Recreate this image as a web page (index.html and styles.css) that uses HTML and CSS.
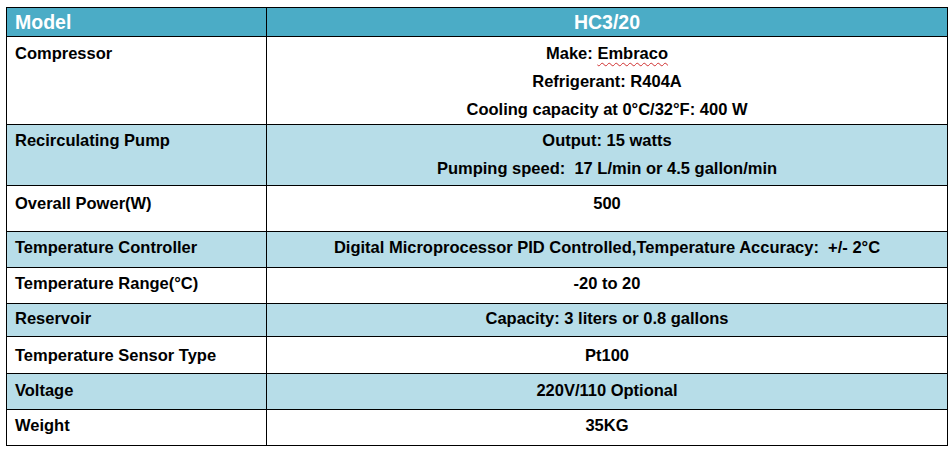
FILE: index.html
```html
<!DOCTYPE html>
<html lang="en">
<head>
<meta charset="utf-8">
<title>HC3/20 Specifications</title>
<link rel="stylesheet" href="styles.css">
</head>
<body>
<table class="spec">
  <colgroup><col class="col-label"><col class="col-value"></colgroup>
  <tr class="head">
    <th class="label">Model</th>
    <th class="value">HC3/20</th>
  </tr>
  <tr class="r-compressor pad-2">
    <td class="label">Compressor</td>
    <td class="value">Make: <span class="spell">Embraco</span><br>Refrigerant: R404A<br>Cooling capacity at 0°C/32°F: 400 W</td>
  </tr>
  <tr class="r-pump tint pad-1">
    <td class="label">Recirculating Pump</td>
    <td class="value">Output: 15 watts<br>Pumping speed:&nbsp; 17 L/min or 4.5 gallon/min</td>
  </tr>
  <tr class="r-power pad-3">
    <td class="label">Overall Power(W)</td>
    <td class="value">500</td>
  </tr>
  <tr class="r-36 tint pad-1">
    <td class="label">Temperature Controller</td>
    <td class="value">Digital Microprocessor PID Controlled,Temperature Accuracy:&nbsp; +/- 2°C</td>
  </tr>
  <tr class="r-36 pad-1">
    <td class="label">Temperature Range(°C)</td>
    <td class="value">-20 to 20</td>
  </tr>
  <tr class="r-reservoir tint pad-0">
    <td class="label">Reservoir</td>
    <td class="value">Capacity: 3 liters or 0.8 gallons</td>
  </tr>
  <tr class="r-sensor pad-4">
    <td class="label">Temperature Sensor Type</td>
    <td class="value">Pt100</td>
  </tr>
  <tr class="r-36 tint pad-2">
    <td class="label">Voltage</td>
    <td class="value">220V/110 Optional</td>
  </tr>
  <tr class="r-36 pad-1">
    <td class="label">Weight</td>
    <td class="value">35KG</td>
  </tr>
</table>
</body>
</html>
```
FILE: styles.css
```css
html, body {
  margin: 0;
  padding: 0;
  background: #ffffff;
}

body {
  font-family: "Liberation Sans", Arial, sans-serif;
  font-weight: bold;
  color: #000000;
}

.spec {
  border-collapse: collapse;
  margin: 7px 0 0 6px;
  width: 942px;
  table-layout: fixed;
}

.col-label { width: 260px; }

.spec th,
.spec td {
  border: 1px solid #000000;
  padding: 0 8px 0 8px;
  vertical-align: top;
  font-size: 16.5px;
  line-height: 28px;
}

.spec .value { text-align: center; }
.spec .label { text-align: left; }

.head { height: 29px; }

.head th {
  background: #4bacc6;
  color: #ffffff;
  font-size: 19.5px;
  line-height: 26px;
  vertical-align: middle;
  padding-top: 0;
  padding-bottom: 0;
}

.tint td { background: #b7dde8; }

.r-compressor { height: 88px; }
.r-pump { height: 61px; }
.r-power { height: 46px; }
.r-36 { height: 36px; }
.r-reservoir { height: 33px; }
.r-sensor { height: 37px; }

.pad-0 td { padding-top: 0; }
.pad-1 td { padding-top: 1px; }
.pad-2 td { padding-top: 2px; }
.pad-3 td { padding-top: 3px; }
.pad-4 td { padding-top: 4px; }

.spell {
  text-decoration: underline wavy #d03030;
  text-decoration-thickness: 1px;
  text-underline-offset: 3px;
}
```
